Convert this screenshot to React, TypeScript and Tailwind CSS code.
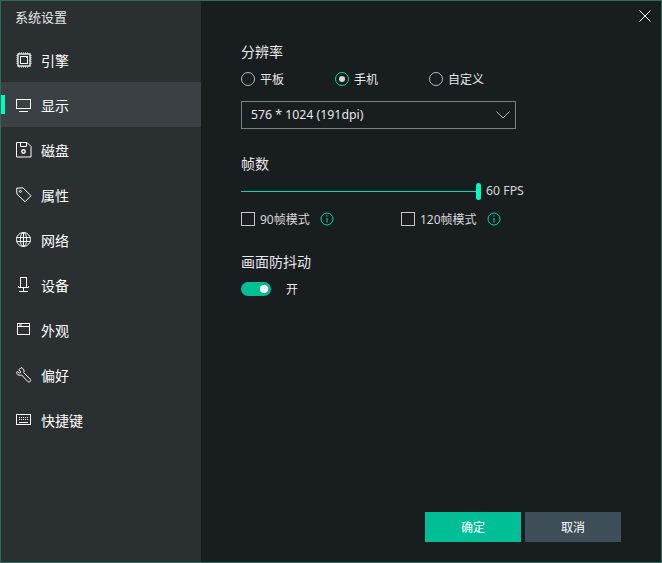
import type { ReactNode } from "react";

const iconClass = "w-[16px] h-[16px] text-white";

function Svg({ children }: { children: ReactNode }) {
  return (
    <svg viewBox="0 0 16 16" fill="none" stroke="currentColor" strokeWidth="1" className={iconClass}>
      {children}
    </svg>
  );
}

const items: { label: string; icon: ReactNode; active?: boolean }[] = [
  {
    label: "引擎",
    icon: (
      <Svg>
        <rect x="2" y="2" width="12" height="12" strokeWidth="1.3" />
        <rect x="4.500" y="4.500" width="7" height="7" />
        <path d="M3 1h1M5 1h1M7 1h1M9 1h1M11 1h1M3 15h1M5 15h1M7 15h1M9 15h1M11 15h1M1 3v1M1 5v1M1 7v1M1 9v1M1 11v1M15 3v1M15 5v1M15 7v1M15 9v1M15 11v1" />
        <rect x="10" y="5" width="1" height="1" fill="currentColor" stroke="none" />
      </Svg>
    ),
  },
  {
    label: "显示",
    active: true,
    icon: (
      <Svg>
        <rect x="0.500" y="2.500" width="14" height="9" />
        <path d="M3 14.500h9" />
      </Svg>
    ),
  },
  {
    label: "磁盘",
    icon: (
      <Svg>
        <path d="M.5.500h10.500l4 4v10.500H.5z" />
        <path d="M4.500.500v4h6v-4" />
        <circle cx="7.500" cy="9.500" r="1.700" strokeWidth="1.400" />
      </Svg>
    ),
  },
  {
    label: "属性",
    icon: (
      <Svg>
        <path d="M.7 1.200 7 .8l8 8-6 6L.9 7z" />
        <circle cx="4.400" cy="4.400" r="1" />
      </Svg>
    ),
  },
  {
    label: "网络",
    icon: (
      <Svg>
        <circle cx="7.500" cy="7.500" r="7" />
        <ellipse cx="7.500" cy="7.500" rx="3.200" ry="7" />
        <path d="M.5 5.500h14M.5 9.500h14M7.500.5v14" />
      </Svg>
    ),
  },
  {
    label: "设备",
    icon: (
      <Svg>
        <rect x="4.500" y="0.500" width="6" height="10" />
        <path d="M2.500 9v1.500h10V9M7.500 10.500v4M3 14.500h9" />
      </Svg>
    ),
  },
  {
    label: "外观",
    icon: (
      <Svg>
        <rect x="1.500" y="1.500" width="12" height="11" />
        <path d="M1.500 4.500h12M3 3h3" />
      </Svg>
    ),
  },
  {
    label: "偏好",
    icon: (
      <Svg>
        <path d="M5 .7 2.900 2.800l2 2.100-1.400 1.400-2-2L.6 5.300C.7 7.400 2.500 8.700 4.500 8.200l1-.3 6.300 6.600c.7.700 1.800.7 2.400 0 .7-.7.7-1.700 0-2.400L7.800 5.700l.2-1C8.300 2.600 7 1 5 .7z" />
      </Svg>
    ),
  },
  {
    label: "快捷键",
    icon: (
      <Svg>
        <rect x="0.500" y="2.500" width="14" height="10" />
        <path d="M3 5.500h1M5 5.500h1M7 5.500h1M9 5.500h1M11 5.500h1M3 7.500h1M5 7.500h1M7 7.500h1M9 7.500h1M11 7.500h1M3 10.500h9" />
      </Svg>
    ),
  },
];

function Radio({ label, checked, width }: { label: string; checked?: boolean; width: string }) {
  return (
    <div className={`flex items-center gap-[5px] ${width}`}>
      <span
        className={`w-[14px] h-[14px] rounded-full border flex items-center justify-center ${
          checked ? "border-[#00d8a8]" : "border-[#b8b8b8]"
        }`}
      >
        {checked && <span className="w-[6px] h-[6px] rounded-full bg-[#d8d8d8]" />}
      </span>
      <span className="pt-[1px] text-[12px] leading-[18px] text-[#e8e8e8]">{label}</span>
    </div>
  );
}

function InfoIcon() {
  return (
    <svg viewBox="0 0 14 14" fill="none" className="w-[14px] h-[14px] text-[#00d8a8]" stroke="currentColor">
      <circle cx="7" cy="7" r="6" />
      <path d="M7 6v4.500" />
      <path d="M7 3.200v1.400" />
    </svg>
  );
}

function Check({ label, width }: { label: string; width: string }) {
  return (
    <div className={`flex items-center ${width}`}>
      <span className="w-[14px] h-[14px] border border-[#c4c4c4]" />
      <span className="ml-[5px] pt-[1px] text-[12px] leading-[18px] text-[#d8d8d8]">{label}</span>
      <span className="ml-[10px]">
        <InfoIcon />
      </span>
    </div>
  );
}

export default function App() {
  return (
    <div
      className="relative w-[662px] h-[563px] flex border border-[#2f6b5c] bg-[#181d20] text-white overflow-hidden"
      style={{ fontFamily: '"Noto Sans", "Noto Sans CJK SC", sans-serif' }}
    >
      {/* Sidebar */}
      <aside className="w-[200px] shrink-0 bg-[#2a2f32] flex flex-col">
        <div className="h-[36px] pl-[14px] pb-[2px] flex items-center text-[13px] text-[#e8e8e8]">系统设置</div>
        {items.map((item) => (
          <div
            key={item.label}
            className={`relative h-[45px] flex items-center pl-[15px] gap-[9px] ${item.active ? "bg-[#3a4044]" : ""}`}
          >
            {item.active && <span className="absolute left-0 top-[13px] w-[4px] h-[19px] bg-[#00fcc0]" />}
            {item.icon}
            <span className="pt-[1px] text-[14px] text-white">{item.label}</span>
          </div>
        ))}
      </aside>

      {/* Main */}
      <main className="flex-1 flex flex-col pl-[40px] pr-[40px] pt-[41px] pb-[20px]">
        <div className="text-[14px] leading-[20px] text-[#e8e8e8]">分辨率</div>
        <div className="mt-[7px] flex items-center h-[20px]">
          <Radio label="平板" width="w-[94px]" />
          <Radio label="手机" checked width="w-[94px]" />
          <Radio label="自定义" width="w-[94px]" />
        </div>
        <div className="mt-[12px] w-[275px] h-[28px] border border-[#7a7f82] flex items-center justify-between pl-[9px] pr-[5px]">
          <span className="text-[12.300px] text-[#e8e8e8]">576 * 1024 (191dpi)</span>
          <svg viewBox="0 0 14 8" fill="none" stroke="#b8b8b8" className="w-[14px] h-[8px]">
            <path d="M.5.500 7 7 13.500.500" />
          </svg>
        </div>

        <div className="mt-[25px] text-[14px] leading-[20px] text-[#e8e8e8]">帧数</div>
        <div className="mt-[8px] flex items-center h-[18px]">
          <div className="relative w-[240px] h-[1px] bg-[#00dcaa]">
            <span className="absolute right-0 top-[-8px] w-[5px] h-[17px] rounded-full bg-[#00fcc0]" />
          </div>
          <span className="ml-[5px] pt-[1px] text-[12.300px] text-[#d8d8d8]">60 FPS</span>
        </div>
        <div className="mt-[10px] flex items-center h-[18px]">
          <Check label="90帧模式" width="w-[160px]" />
          <Check label="120帧模式" width="w-[130px]" />
        </div>

        <div className="mt-[24px] text-[14px] leading-[20px] text-[#e8e8e8]">画面防抖动</div>
        <div className="mt-[7px] flex items-center h-[20px]">
          <span className="w-[30px] h-[14px] rounded-full bg-[#00bf97] flex items-center justify-end pr-[3px]">
            <span className="w-[8px] h-[8px] rounded-full bg-white" />
          </span>
          <span className="ml-[15px] pt-[1px] text-[12px] text-[#e8e8e8]">开</span>
        </div>

        <div className="mt-auto flex justify-end gap-[4px]">
          <button className="w-[96px] h-[30px] pt-[1px] bg-[#00bf97] text-[12px] text-white">确定</button>
          <button className="w-[96px] h-[30px] pt-[1px] bg-[#3e4f59] text-[12px] text-white">取消</button>
        </div>
      </main>

      <button className="absolute right-[10px] top-[9px] w-[12px] h-[12px]">
        <svg viewBox="0 0 12 12" stroke="#ffffff" className="w-[12px] h-[12px]">
          <path d="M.5.500 11.500 11.500M11.500.500.500 11.500" />
        </svg>
      </button>
    </div>
  );
}
